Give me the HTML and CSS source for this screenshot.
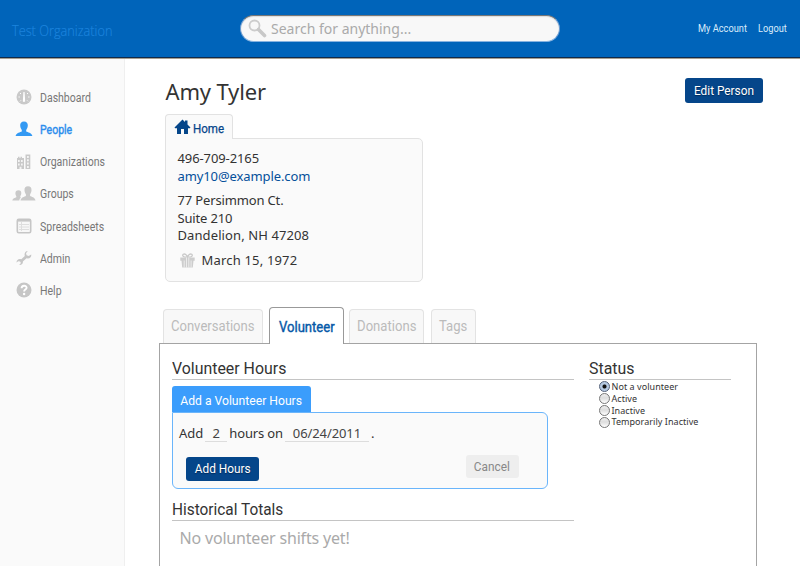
FILE: index.html
```html
<!DOCTYPE html>
<html lang="en">
<head>
<meta charset="utf-8">
<title>Amy Tyler</title>
<link rel="stylesheet" href="styles.css">
</head>
<body>
<header class="top">
  <div class="org"><span>Test Organization</span></div>
  <div class="search">
    <svg width="19" height="19" viewBox="0 0 19 19"><circle cx="6.5" cy="6.5" r="5" fill="none" stroke="#ccc" stroke-width="1.8"/><path d="M10.5 10.5L16.5 16.5" stroke="#c8c8c8" stroke-width="3.6" stroke-linecap="round"/></svg>
    <span class="placeholder">Search for anything...</span>
  </div>
  <nav class="account"><a class="my">My Account</a><a class="out">Logout</a></nav>
</header>
<div class="body">
  <nav class="side">
    <a class="item"><span class="ico"><svg width="16" height="16" viewBox="0 0 16 16"><circle cx="8" cy="8" r="7.5" fill="#c9c9c9"/><path d="M7.4 3h1.2l.5 8.2a1.2 1.2 0 1 1-2.2 0z" fill="#fff"/><path d="M2.5 8h1.3M12.2 8h1.3M4 4l1 1M12 4l-1 1M4 12.3l.9-.9M12 12.3l-.9-.9" stroke="#fff"/></svg></span><span class="label">Dashboard</span></a>
    <a class="item on"><span class="ico"><svg width="18" height="16" viewBox="0 0 18 16"><path d="M9 .4c2.600 0 4 1.700 3.800 4.200-.1 2-.8 3.400-1.600 4.400v1.600c1.600.8 5.200 1.200 6.200 4.400H.6c1-3.200 4.600-3.600 6.200-4.400V9C6 8 5.300 6.600 5.200 4.600 5 2.100 6.400.4 9 .4z" fill="#3399f3"/></svg></span><span class="label">People</span></a>
    <a class="item"><span class="ico"><svg width="16" height="16" viewBox="0 0 16 16"><path d="M1 4h1V2.800h1.500V4h1V2.800H6V4h2v11H1zM9.500.5h4.800V15H9.500z" fill="#c9c9c9"/><path d="M2 6h1.700v2H2zM5 6h1.700v2H5zM2 9.500h1.700v2H2zM5 9.500h1.700v2H5zM3.500 12.800h2V15h-2zM11 2h1.800v2H11zM11 5.300h1.800v2H11zM11 8.600h1.800v2H11zM11 11.900h1.800v2H11z" fill="#f4f4f4"/></svg></span><span class="label">Organizations</span></a>
    <a class="item"><span class="ico wide"><svg width="24" height="16" viewBox="0 0 24 16"><path d="M16 .3c2.400 0 3.700 1.600 3.500 3.900-.1 1.900-.7 3-1.400 4v1.900c1.400.8 4.700 1.300 5.400 4.400H8.500c.7-3.100 4-3.600 5.400-4.400V8.200c-.7-1-1.300-2.100-1.400-4C12.300 1.900 13.600.3 16 .3z" fill="#c9c9c9"/><path d="M6.500 4.300c2 0 2.900 1.200 2.800 3-.1 1.400-.5 2.100-1 2.900v1.100l.7.3c-1 .8-1.600 1.700-1.800 2.900H.3c.5-2.200 2.700-2.600 4-3.200v-1.100c-.5-.8-.8-1.500-.9-2.900 0-1.800 1.100-3 3.100-3z" fill="#c9c9c9"/></svg></span><span class="label">Groups</span></a>
    <a class="item"><span class="ico"><svg width="16" height="16" viewBox="0 0 16 16"><rect x="1.300" y="1.300" width="13.400" height="13.400" rx="1.500" fill="#f7f7f7" stroke="#c6c6c6" stroke-width="1.600"/><path d="M1.500 2.600h13" stroke="#c6c6c6" stroke-width="2"/><path d="M3 6.500h10M3 9h10M3 11.500h10M5.500 4v9" stroke="#dedede" stroke-width="1"/></svg></span><span class="label">Spreadsheets</span></a>
    <a class="item"><span class="ico"><svg width="16" height="16" viewBox="0 0 16 16"><path d="M11.800 1L10 3.200l.6 2L12.700 6l2.500-1.500c.4 2-1 3.900-3.200 3.900l-1.500-.2-3.600 3.300c.3 2-1.400 3.800-3.700 3.400l1.700-1.800-.8-1.600-1.800-.3-1.800 1.300C.5 10.300 2.200 8.800 4.300 9l1 .2L8.800 6C8 3.400 9.300 1.200 11.800 1z" fill="#c6c6c6"/></svg></span><span class="label">Admin</span></a>
    <a class="item"><span class="ico"><svg width="16" height="16" viewBox="0 0 16 16"><circle cx="8" cy="8" r="7.500" fill="#c6c6c6"/><path d="M5.600 6.300c0-3.400 5-3.300 5-.6 0 1.800-2.500 1.800-2.500 3.700" fill="none" stroke="#fff" stroke-width="1.900"/><circle cx="8.100" cy="12" r="1.200" fill="#fff"/></svg></span><span class="label">Help</span></a>
  </nav>
  <main class="main">
    <div class="title"><h1>Amy Tyler</h1><button class="btn edit"><span>Edit Person</span></button></div>
    <section class="contact">
      <div class="hometab"><svg width="17" height="16" viewBox="0 0 17 16"><path d="M8.500.5L11 3V1.500h2.500v4L16.500 8.500l-.7.800H14V15h-4v-5H7v5H3V9.300H1.200L.5 8.500z" fill="#05468a"/></svg><span>Home</span></div>
      <div class="card">
        <div class="phone">496-709-2165</div>
        <div class="email">amy10@example.com</div>
        <div class="addr"><div class="street">77 Persimmon Ct.</div><div class="street">Suite 210</div><div class="city">Dandelion, NH 47208</div></div>
        <div class="bday"><svg width="15" height="15" viewBox="0 0 15 15"><path d="M7.500 4C4 4.500 1.500 3 3.300 1.300 5 .3 6.700 1.800 7.500 4c.8-2.200 2.500-3.700 4.200-2.700C13.500 3 11 4.500 7.500 4z" fill="none" stroke="#c9c9c9" stroke-width="1.300"/><path d="M.3 4.500h14.400v3.200H.3zM1.500 7.500h12l-.7 7H2.200z" fill="#cdcdcd"/><path d="M4.200 7.500v7M6.500 4.500v10M8.800 4.500v10M11.100 7.500v7" stroke="#f4f4f4" stroke-width=".8"/></svg><span>March 15, 1972</span></div>
      </div>
    </section>
    <div class="tabs">
      <div class="tab conv"><span>Conversations</span></div><div class="tab active"><span>Volunteer</span></div><div class="tab don"><span>Donations</span></div><div class="tab tags"><span>Tags</span></div>
    </div>
    <section class="panel">
      <div class="left">
        <h2 class="h-hours"><span>Volunteer Hours</span></h2>
        <div class="addtab"><span>Add a Volunteer Hours</span></div>
        <div class="form">
          <div class="sentence"><span class="w-add">Add</span><span class="field qty">2</span><span class="w-hours">hours on</span><span class="field date">06/24/2011</span><span>.</span></div>
          <div class="actions"><button class="btn add"><span>Add Hours</span></button><button class="btn cancel"><span>Cancel</span></button></div>
        </div>
        <h2 class="h-hist"><span>Historical Totals</span></h2>
        <p class="empty">No volunteer shifts yet!</p>
      </div>
      <aside class="status">
        <h2 class="h-status"><span>Status</span></h2>
        <div class="radio"><i class="dot checked"></i><span>Not a volunteer</span></div>
        <div class="radio"><i class="dot"></i><span>Active</span></div>
        <div class="radio"><i class="dot"></i><span>Inactive</span></div>
        <div class="radio"><i class="dot"></i><span>Temporarily Inactive</span></div>
      </aside>
    </section>
  </main>
</div>
</body>
</html>
```

FILE: styles.css
```css
* { box-sizing: border-box; }
body { margin: 0; height: 566px; overflow: hidden; background: #fff; color: #333; font-family: "Noto Sans", "Open Sans", sans-serif; }
h1, h2, p { margin: 0; font-weight: 400; }
span, a { white-space: nowrap; }
svg { display: block; flex: none; }
.top { height: 59px; background: #0064ba; border-bottom: 1px solid #a79f8f; box-shadow: inset 0 -1px #102b4c; display: flex; align-items: flex-start; }
.org { width: 240px; padding: 22px 0 0 12px; font: 300 14px/18px "Open Sans", sans-serif; color: #1c83dc; -webkit-text-stroke: .2px #1c83dc; }
.org span { display: inline-block; transform: scaleX(.91); transform-origin: left; }
.search { width: 320px; height: 27px; margin-top: 15px; padding: 4px 0 0 7px; border: 1px solid #8c9db0; border-color: #777 #6c9bd0 #86b2e0; border-radius: 14px; background: #f8f8f8; display: flex; box-shadow: inset 0 1px 1px #ddd; }
.search svg { margin-top: -1px; }
.placeholder { margin: 0 0 0 4px; font-size: 14px; line-height: 17px; color: #aaa; }
.account { width: 102px; margin: 22px 0 0 auto; display: flex; font: 10.500px/14px Roboto, sans-serif; color: #d9ebfb; }
.account a { transform: scaleX(.88); transform-origin: left; }
.my { width: 60px; }
.body { display: flex; height: 507px; }
.side { width: 125px; padding-top: 22.200px; background: #fafafa; border-right: 1px solid #efefef; }
.item { height: 32.200px; display: flex; align-items: center; font: 12px/16px Roboto, sans-serif; color: #777; }
.ico { width: 24px; margin: 0 4px 0 12px; display: flex; justify-content: center; }
.label { transform: scaleX(.877); transform-origin: left; padding-top: 1px; }
.on { color: #2b8ded; }
.on .label { -webkit-text-stroke: .4px #2b8ded; }
.main { flex: 1; padding-left: 34px; }
.title { display: flex; align-items: flex-start; padding: 19px 37px 0 6.500px; height: 55px; }
h1 { font-size: 22px; line-height: 28px; letter-spacing: -.15px; color: #333; margin-top: -1px; }
.btn { border: 0; padding: 0; display: flex; justify-content: center; align-items: center; border-radius: 3px; background: #05468a; color: #fff; font: 13px/16px Roboto, sans-serif; text-shadow: 0 1px 1px #012b5a; }
.btn span { transform: scaleX(.91); }
.edit { width: 78px; height: 25px; margin-left: auto; padding-top: 1px; }
.contact { width: 258px; margin-left: 6px; }
.hometab { position: relative; width: 68px; height: 25px; padding: 4px 0 0 8px; margin-bottom: -1px; border: 1px solid #e2e2e2; border-bottom: 0; border-radius: 4px 4px 0 0; background: #fafafa; display: flex; gap: 2px; font: 13px/19px Roboto, sans-serif; color: #05468a; -webkit-text-stroke: .25px #05468a; }
.hometab span { transform: scaleX(.89); transform-origin: left; }
.card { height: 144px; padding: 11px 11.500px; border: 1px solid #e2e2e2; border-radius: 0 5px 5px 5px; background: #fafafa; font-size: 13px; line-height: 17.500px; }
.phone, .email { letter-spacing: -.1px; }
.email { color: #05509a; }
.addr { margin-top: 7px; }
.street { letter-spacing: -.15px; }
.city { letter-spacing: .1px; }
.bday { display: flex; align-items: center; margin-top: 7px; padding-left: 2px; gap: 7px; letter-spacing: .18px; }
.tabs { height: 37px; margin-top: 25px; padding-left: 4px; display: flex; align-items: flex-end; position: relative; }
.tab { height: 34px; margin-bottom: 1px; border: 1px solid #e3e3e3; border-bottom: 0; border-radius: 4px 4px 0 0; background: #f8f8f8; color: #bbb; font: 14px/33px Roboto, sans-serif; display: flex; justify-content: center; }
.tab span { transform: scaleX(.935); }
.conv { width: 100px; }
.active { width: 75px; height: 37px; margin: 0 5px 0 6px; border-color: #999; background: #fff; color: #0659a8; line-height: 38px; }
.active span { -webkit-text-stroke: .4px #0659a8; }
.don { width: 75px; }
.tags { width: 45px; margin-left: 7px; }
.panel { width: 598px; height: 230px; margin-top: -1px; padding: 14px 0 0 11.500px; border: 1px solid #a4a4a4; border-bottom: 0; display: flex; }
.left { width: 402px; margin-right: 15px; }
h2 { font: 17px/21px Roboto, sans-serif; height: 22px; border-bottom: 1px solid #c4c4c4; color: #333; }
h2 span { display: inline-block; transform: scaleX(.935); transform-origin: left; }
.h-hist span { transform: scaleX(.905); }
.addtab { width: 139px; height: 26px; margin-top: 6px; border-radius: 3px 3px 0 0; background: #3b9dfc; color: #fff; display: flex; justify-content: center; font: 13px/29px Roboto, sans-serif; }
.addtab span { transform: scaleX(.935); }
.form { width: 376px; height: 77px; border: 1px solid #6ab5fb; border-radius: 0 6px 6px 6px; background: #fafafa; padding: 12px 0 0 6.500px; }
.sentence { display: flex; font-size: 13px; line-height: 17px; }
.field { height: 17px; border-bottom: 1px solid #ddd; text-align: center; color: #444; }
.qty { width: 22px; margin: 0 2px; }
.w-hours { letter-spacing: -.15px; }
.date { width: 84px; margin: 0 2px; letter-spacing: -.1px; }
.actions { display: flex; padding: 13px 28px 0 7px; align-items: flex-start; }
.add { width: 73px; height: 24px; margin-top: 2px; }
.cancel { width: 53px; height: 23px; margin-left: auto; background: #eee; color: #888; text-shadow: none; }
.h-hist { margin-top: 10px; }
.empty { margin: 6px 0 0 8px; font-size: 16px; line-height: 22px; letter-spacing: -.18px; color: #aaa; }
.status { width: 142px; }
.radio { height: 11.800px; padding-left: 10px; display: flex; align-items: center; gap: 2px; font-size: 9px; line-height: 12px; letter-spacing: .05px; }
.status .radio:nth-child(2) { margin-top: 1px; }
.dot { width: 11px; height: 11px; border: 1px solid #777; border-radius: 50%; background: linear-gradient(#eee, #ddd 45%, #fff); }
.checked { background: radial-gradient(circle, #111 0 1.500px, #b5c9e2 2.500px); border-color: #53617a; }
```
